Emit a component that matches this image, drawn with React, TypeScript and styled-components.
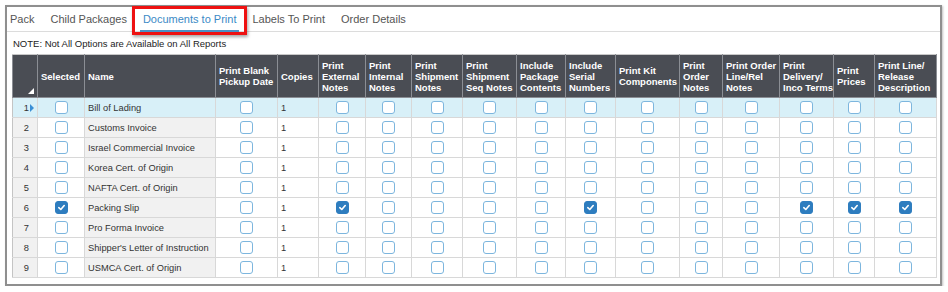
import React from "react"
import styled, { createGlobalStyle } from "styled-components"

const GlobalStyle = createGlobalStyle`
  body {
    margin: 0;
    background: #ffffff;
    font-family: "Liberation Sans", Arial, sans-serif;
  }
`

type Col = { key: string; label: string[]; width: number; kind: "check" | "text" | "name" }

const columns: Col[] = [
  { key: "selected", label: ["Selected"], width: 47, kind: "check" },
  { key: "name", label: ["Name"], width: 131, kind: "name" },
  { key: "blank", label: ["Print Blank", "Pickup Date"], width: 62, kind: "check" },
  { key: "copies", label: ["Copies"], width: 41, kind: "text" },
  { key: "ext", label: ["Print", "External", "Notes"], width: 47, kind: "check" },
  { key: "int", label: ["Print", "Internal", "Notes"], width: 46, kind: "check" },
  { key: "ship", label: ["Print", "Shipment", "Notes"], width: 51, kind: "check" },
  { key: "seq", label: ["Print", "Shipment", "Seq Notes"], width: 54, kind: "check" },
  { key: "pkg", label: ["Include", "Package", "Contents"], width: 49, kind: "check" },
  { key: "serial", label: ["Include", "Serial", "Numbers"], width: 50, kind: "check" },
  { key: "kit", label: ["Print Kit", "Components"], width: 64, kind: "check" },
  { key: "orderNotes", label: ["Print", "Order", "Notes"], width: 43, kind: "check" },
  { key: "orderLine", label: ["Print Order", "Line/Rel", "Notes"], width: 57, kind: "check" },
  { key: "delivery", label: ["Print", "Delivery/", "Inco Terms"], width: 54, kind: "check" },
  { key: "prices", label: ["Print", "Prices"], width: 41, kind: "check" },
  { key: "lineRel", label: ["Print Line/", "Release", "Description"], width: 62, kind: "check" },
]

const docs = [
  "Bill of Lading",
  "Customs Invoice",
  "Israel Commercial Invoice",
  "Korea Cert. of Origin",
  "NAFTA Cert. of Origin",
  "Packing Slip",
  "Pro Forma Invoice",
  "Shipper's Letter of Instruction",
  "USMCA Cert. of Origin",
]

const checkedInPackingSlip = ["selected", "ext", "serial", "delivery", "prices", "lineRel"]

const Frame = styled.div`
  margin: 5px 0 0 5px;
  width: 933px;
  height: 277px;
  border: 2px solid #8f8f8f;
  box-shadow: 1px 1px 2px rgba(0, 0, 0, 0.25);
  display: flex;
  flex-direction: column;
`

const TabBar = styled.div`
  display: flex;
  gap: 10px;
  height: 24px;
  border-bottom: 1px solid #dcdcdc;
`

const Tab = styled.div<{ $active?: boolean }>`
  position: relative;
  display: flex;
  align-items: center;
  padding: 0 3px;
  font-size: 11px;
  color: ${(p) => (p.$active ? "#3b8ac6" : "#555555")};
  border-bottom: 2px solid ${(p) => (p.$active ? "#4a90c6" : "transparent")};
  margin-bottom: -1px;
`

const Highlight = styled.div`
  position: absolute;
  left: -8px;
  right: -8px;
  top: -1px;
  bottom: -5px;
  border: 3px solid #ee1111;
  box-shadow: 1px 2px 3px rgba(0, 0, 0, 0.35);
  pointer-events: none;
`

const Body = styled.div`
  padding: 0 0 0 5px;
`

const Note = styled.div`
  height: 22px;
  padding-left: 1px;
  display: flex;
  align-items: center;
  font-size: 9.5px;
  color: #222;
`

const Grid = styled.table`
  border-collapse: collapse;
  table-layout: fixed;
  width: 924px;
  font-size: 9.3px;
  color: #333;
`

const Head = styled.th`
  position: relative;
  height: 42px;
  padding: 0 3px;
  background: #4a4d54;
  color: #ffffff;
  font-size: 9.5px;
  font-weight: bold;
  line-height: 11px;
  text-align: left;
  vertical-align: middle;
  border: 1px solid #8b8e94;
  border-top-color: #c8c8c8;
  overflow: hidden;
  white-space: nowrap;
`

const SortMark = styled.span`
  position: absolute;
  right: 3px;
  bottom: 3px;
  width: 0;
  height: 0;
  border-left: 6px solid transparent;
  border-bottom: 6px solid #ffffff;
`

const Row = styled.tr<{ $current?: boolean }>`
  height: 20px;
  background: ${(p) => (p.$current ? "#d8f0f8" : "#ffffff")};
`

const Cell = styled.td<{ $shade?: boolean; $current?: boolean; $align?: string }>`
  height: 19px;
  padding: 0 3px;
  border: 1px solid #d8d8d8;
  text-align: ${(p) => p.$align || "left"};
  vertical-align: middle;
  white-space: nowrap;
  overflow: hidden;
  background: ${(p) => (p.$current ? "#d8f0f8" : p.$shade ? "#f1f1f1" : "transparent")};
`

const NumCell = styled(Cell)`
  position: relative;
  text-align: right;
  padding-right: 8px;
  border-left-color: #c4c4c4;
`

const Marker = styled.span`
  position: absolute;
  right: 3px;
  top: 50%;
  margin-top: -4px;
  width: 0;
  height: 0;
  border-top: 4px solid transparent;
  border-bottom: 4px solid transparent;
  border-left: 4px solid #3a8fd6;
`

const Box = styled.span<{ $checked?: boolean }>`
  display: inline-flex;
  align-items: center;
  justify-content: center;
  width: 13px;
  height: 13px;
  box-sizing: border-box;
  border: 1.5px solid ${(p) => (p.$checked ? "#2e7dbf" : "#7db6de")};
  border-radius: 3px;
  background: ${(p) => (p.$checked ? "#2e7dbf" : "#ffffff")};
  vertical-align: middle;
`

const Check = ({ checked }: { checked: boolean }) => (
  <Box $checked={checked}>
    {checked && (
      <svg width="9" height="9" viewBox="0 0 10 10">
        <polyline points="2,5.2 4.2,7.2 8,2.8" fill="none" stroke="#fff" strokeWidth="1.8" strokeLinecap="round" strokeLinejoin="round" />
      </svg>
    )}
  </Box>
)

const tabs = ["Pack", "Child Packages", "Documents to Print", "Labels To Print", "Order Details"]

export default function App() {
  return (
    <>
      <GlobalStyle />
      <Frame>
        <TabBar>
          {tabs.map((t) => (
            <Tab key={t} $active={t === "Documents to Print"}>
              {t}
              {t === "Documents to Print" && <Highlight />}
            </Tab>
          ))}
        </TabBar>
        <Body>
          <Note>NOTE: Not All Options are Available on All Reports</Note>
          <Grid>
            <colgroup>
              <col style={{ width: 25 }} />
              {columns.map((c) => (
                <col key={c.key} style={{ width: c.width }} />
              ))}
            </colgroup>
            <thead>
              <tr>
                <Head>
                  <SortMark />
                </Head>
                {columns.map((c) => (
                  <Head key={c.key}>
                    {c.label.map((l, i) => (
                      <React.Fragment key={i}>
                        {i > 0 && <br />}
                        {l}
                      </React.Fragment>
                    ))}
                  </Head>
                ))}
              </tr>
            </thead>
            <tbody>
              {docs.map((d, r) => {
                const current = r === 0
                return (
                  <Row key={d} $current={current}>
                    <NumCell $shade $current={current}>
                      {r + 1}
                      {current && <Marker />}
                    </NumCell>
                    {columns.map((c) => {
                      if (c.kind === "name")
                        return (
                          <Cell key={c.key} $shade $current={current}>
                            {d}
                          </Cell>
                        )
                      if (c.kind === "text")
                        return (
                          <Cell key={c.key} $current={current}>
                            1
                          </Cell>
                        )
                      const on = d === "Packing Slip" && checkedInPackingSlip.includes(c.key)
                      return (
                        <Cell key={c.key} $align="center" $current={current}>
                          <Check checked={on} />
                        </Cell>
                      )
                    })}
                  </Row>
                )
              })}
            </tbody>
          </Grid>
        </Body>
      </Frame>
    </>
  )
}
